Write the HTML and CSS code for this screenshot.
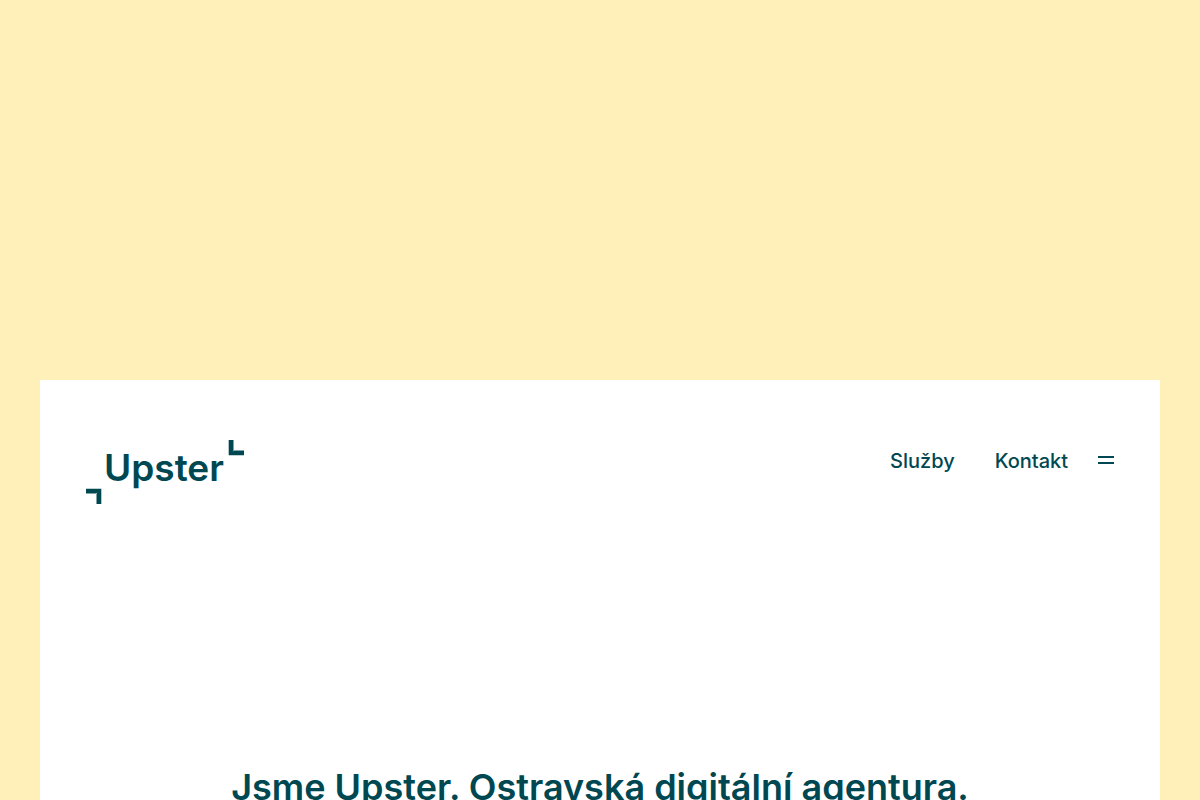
FILE: index.html
```html
<!DOCTYPE html>
<html lang="cs">
<head>
  <meta charset="UTF-8" />
  <meta name="viewport" content="width=device-width, initial-scale=1.0" />
  <title>Upster</title>
  <link rel="stylesheet" href="styles.css">
</head>
<body>
  <div class="page">
    <header class="header">
      <a class="logo" href="#" aria-label="Upster">
        <svg width="158" height="64" viewBox="0 0 158 64" fill="currentColor">
          <path d="M142.700 0h4.800v10.500l-1 1.500 1.500-1.500h10v4.800h-15.300z" />
          <path d="M0 48.700h15.300V64h-4.800V54l1-1.500-1.500 1H0z" />
          <text class="logo-text" x="18" y="41">Upster</text>
        </svg>
      </a>
      <nav class="nav">
        <a href="#sluzby">Služby</a>
        <a href="#kontakt">Kontakt</a>
        <button class="menu" type="button" aria-label="Menu">
          <span></span>
          <span></span>
        </button>
      </nav>
    </header>
    <main class="intro">
      <h1>Jsme Upster. Ostravská digitální agentura.</h1>
    </main>
  </div>
</body>
</html>
```

FILE: styles.css
```css
* {
  box-sizing: border-box;
}
body {
  margin: 0;
  padding: 380px 40px 0;
  background: #fff0b9;
  color: #004851;
  font-family: Inter, "Liberation Sans", sans-serif;
}
.page {
  background: white;
}
.header {
  display: flex;
  justify-content: space-between;
  align-items: flex-start;
  padding: 60px 46px 0;
}
.logo {
  color: inherit;
}
.logo svg {
  display: block;
}
.logo-text {
  font-size: 37px;
  font-weight: 600;
}
.nav {
  display: flex;
  align-items: center;
  padding-top: 9px;
  font-size: 20px;
  font-weight: 500;
  line-height: 24px;
}
.nav a {
  margin-right: 40px;
  color: inherit;
  text-decoration: none;
}
.nav a:nth-child(2) {
  margin-right: 30px;
}
.menu {
  display: flex;
  flex-direction: column;
  gap: 4px;
  padding: 0 0 2px;
  border: none;
  background: none;
  cursor: pointer;
}
.menu span {
  width: 16px;
  height: 2px;
  background: #004851;
}
.intro {
  padding: 261px 40px 80px;
  text-align: center;
}
h1 {
  margin: 0;
  font-size: 36px;
  font-weight: 600;
  line-height: 44px;
}
```
